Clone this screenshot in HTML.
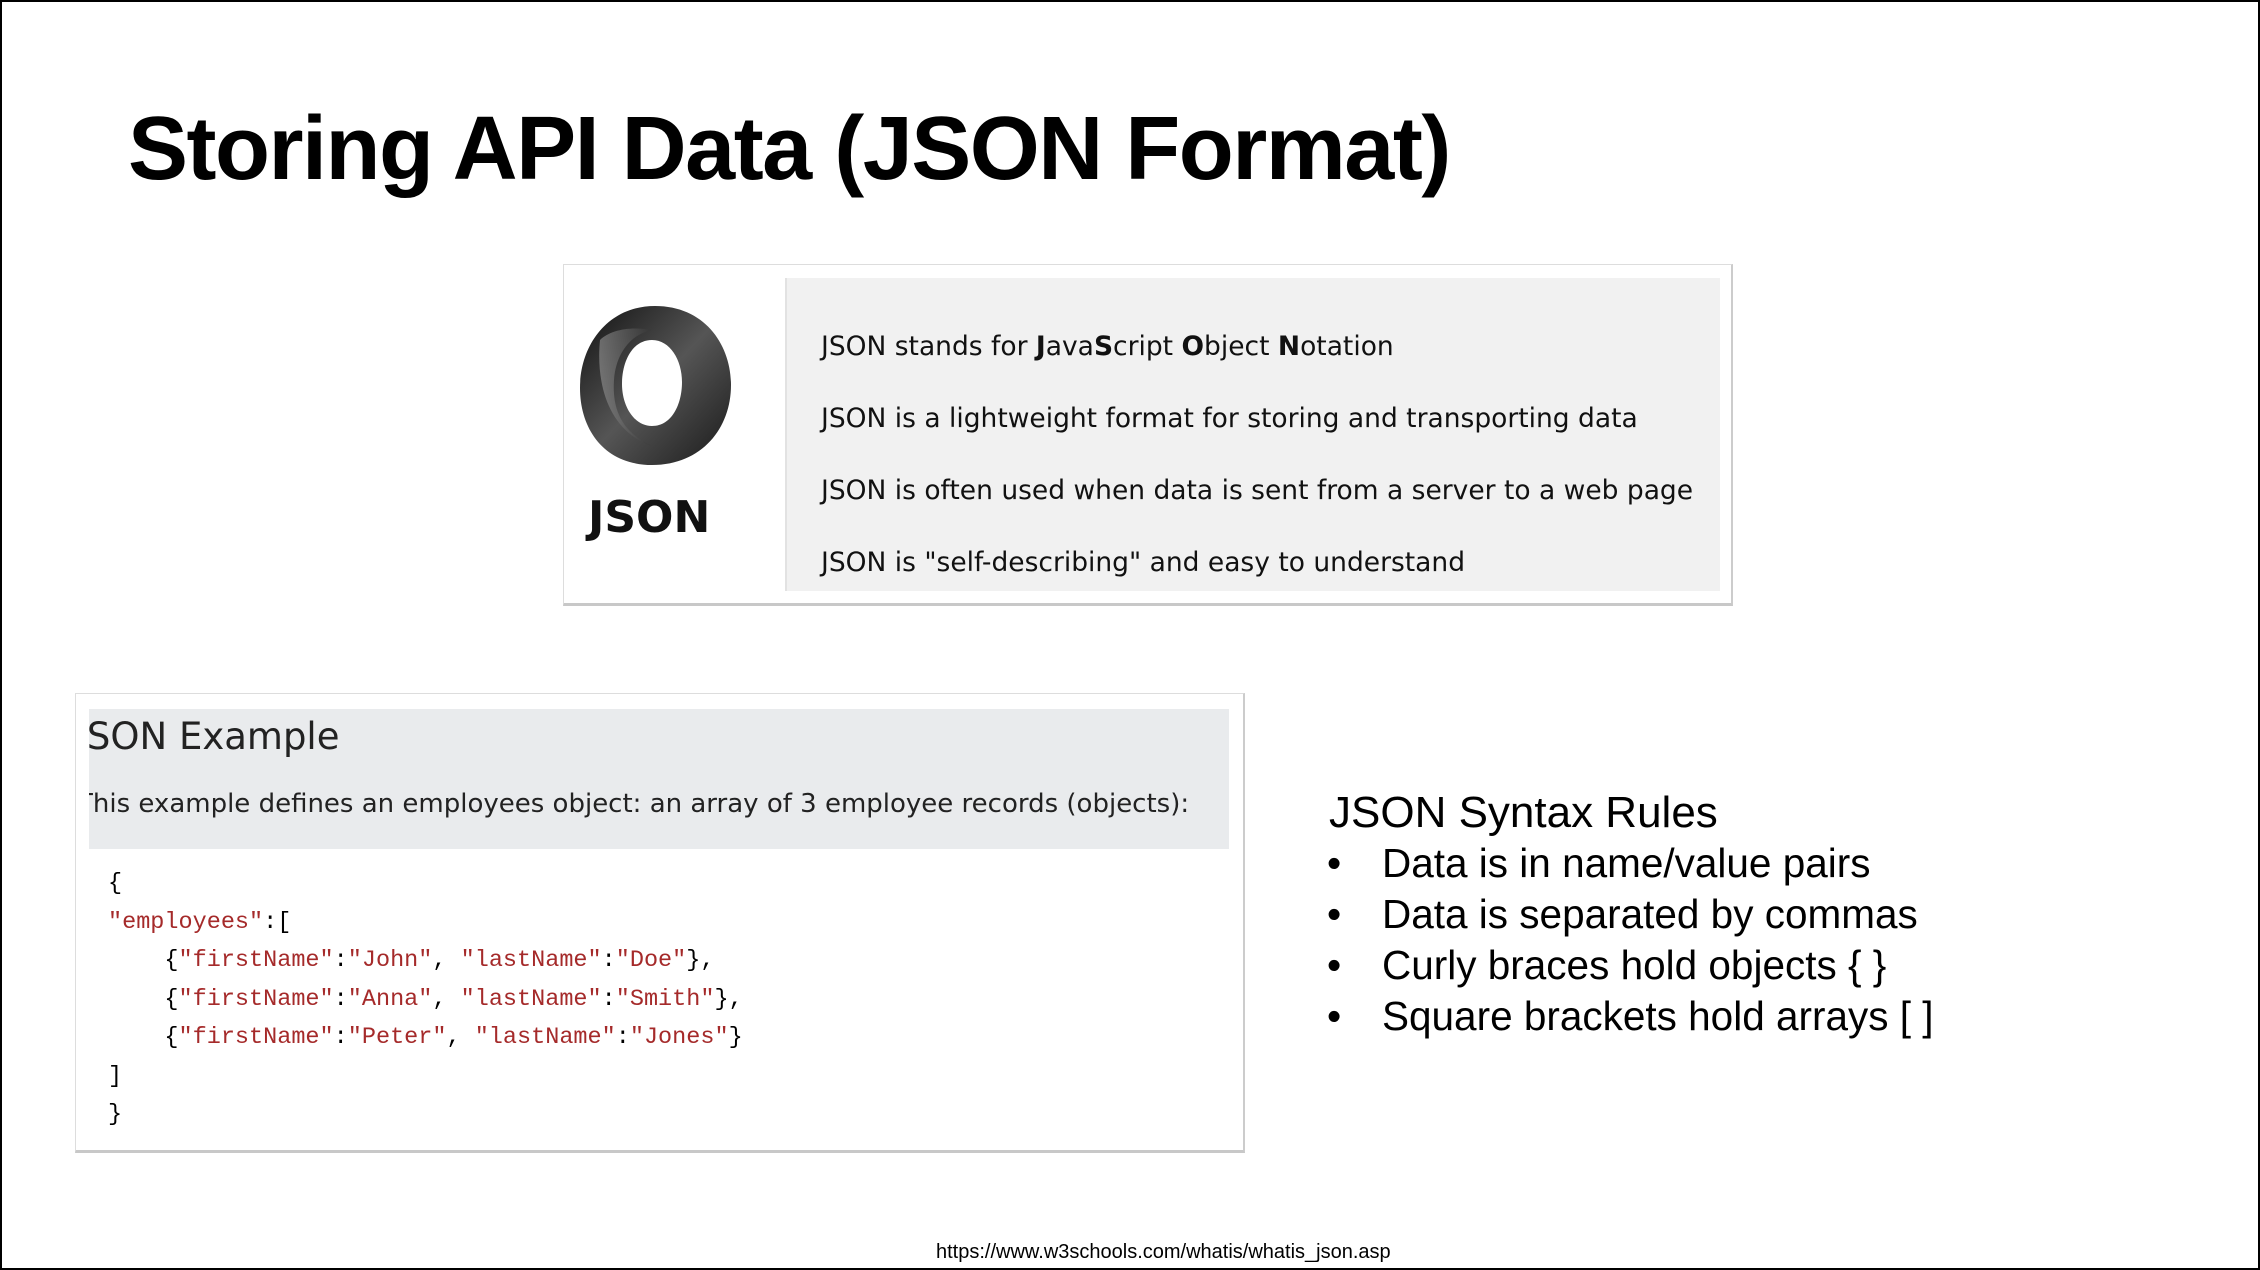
<!DOCTYPE html>
<html><head><meta charset="utf-8"><style>
html,body{margin:0;padding:0}
body{width:2260px;height:1270px;position:relative;overflow:hidden;background:#fff;font-family:"Liberation Sans",sans-serif}
.frame{position:absolute;left:0;top:0;width:2256px;height:1266px;border:2px solid #000}
.abs{position:absolute;white-space:nowrap}
.title{left:128px;top:98px;font-size:90px;font-weight:bold;letter-spacing:-1.5px;color:#000}
.box1{left:563px;top:264px;width:1167px;height:338px;border:1px solid #ddd;border-bottom:3px solid #c8c8c8;border-right:2px solid #ccc;background:#fff}
.panel1{left:785px;top:278px;width:933px;height:313px;background:#f1f1f1;border-left:2px solid #e2e2e2}
.l1{font-family:"DejaVu Sans",sans-serif;font-size:26.5px;color:#111;left:821px}
.box2{left:75px;top:693px;width:1167px;height:456px;border:1px solid #ddd;border-bottom:3px solid #c8c8c8;border-right:2px solid #ccc;background:#fff}
.hdr{left:89px;top:709px;width:1140px;height:140px;background:#e9ebed;overflow:hidden}
.code{font-family:"Liberation Mono",monospace;font-size:23.5px;color:#000}
.s{color:#a52a2a}
.r{font-size:40.5px;color:#000}
</style></head><body>
<div class="frame"></div>
<div class="abs title">Storing API Data (JSON Format)</div>

<div class="abs box1"></div>
<div class="abs panel1"></div>
<svg class="abs" style="left:570px;top:295px" width="180" height="180" viewBox="570 295 180 180">
<defs>
<linearGradient id="g1" x1="0" y1="0" x2="1" y2="1"><stop offset="0" stop-color="#111"/><stop offset="0.5" stop-color="#555"/><stop offset="1" stop-color="#1a1a1a"/></linearGradient>
<linearGradient id="g2" x1="0" y1="0" x2="1" y2="0"><stop offset="0" stop-color="#9a9a9a"/><stop offset="1" stop-color="#333"/></linearGradient>
</defs>
<path fill-rule="evenodd" fill="url(#g1)" d="M655 306 C705 306 731 345 731 385 C731 428 702 465 652 465 C605 465 580 430 580 388 C580 345 608 306 655 306 Z M652 340 C632 340 622 362 622 384 C622 406 634 426 652 426 C672 426 682 404 682 382 C682 360 670 340 652 340 Z"/>
<path fill="url(#g2)" opacity="0.6" d="M600 340 C596 380 606 430 652 446 C622 432 612 410 614 380 C616 352 632 334 652 330 C630 326 610 330 600 340 Z"/>
</svg>
<div class="abs" style="left:588px;top:492px;font-family:'DejaVu Sans',sans-serif;font-weight:bold;font-size:44px;color:#111">JSON</div>
<div class="abs l1" style="top:331px">JSON stands for <b>J</b>ava<b>S</b>cript <b>O</b>bject <b>N</b>otation</div>
<div class="abs l1" style="top:403px">JSON is a lightweight format for storing and transporting data</div>
<div class="abs l1" style="top:475px">JSON is often used when data is sent from a server to a web page</div>
<div class="abs l1" style="top:547px">JSON is "self-describing" and easy to understand</div>

<div class="abs box2"></div>
<div class="abs hdr">
<div class="abs" style="left:-13px;top:6px;font-family:'DejaVu Sans',sans-serif;font-size:37px;color:#222">JSON Example</div>
<div class="abs" style="left:-12px;top:80px;font-family:'DejaVu Sans',sans-serif;font-size:26px;color:#222">This example defines an employees object: an array of 3 employee records (objects):</div>
</div>
<div class="abs code" style="left:108px;top:865px;line-height:38.5px;white-space:pre">{
<span class="s">"employees"</span>:[
    {<span class="s">"firstName"</span>:<span class="s">"John"</span>, <span class="s">"lastName"</span>:<span class="s">"Doe"</span>},
    {<span class="s">"firstName"</span>:<span class="s">"Anna"</span>, <span class="s">"lastName"</span>:<span class="s">"Smith"</span>},
    {<span class="s">"firstName"</span>:<span class="s">"Peter"</span>, <span class="s">"lastName"</span>:<span class="s">"Jones"</span>}
]
}</div>

<div class="abs" style="left:1329px;top:788px;font-size:44px;color:#000">JSON Syntax Rules</div>
<div class="abs r" style="left:1327px;top:840px">•</div><div class="abs r" style="left:1382px;top:840px">Data is in name/value pairs</div>
<div class="abs r" style="left:1327px;top:891px">•</div><div class="abs r" style="left:1382px;top:891px">Data is separated by commas</div>
<div class="abs r" style="left:1327px;top:942px">•</div><div class="abs r" style="left:1382px;top:942px">Curly braces hold objects { }</div>
<div class="abs r" style="left:1327px;top:993px">•</div><div class="abs r" style="left:1382px;top:993px">Square brackets hold arrays [ ]</div>

<div class="abs" style="left:936px;top:1241px;font-size:20px;color:#000">https://www.w3schools.com/whatis/whatis_json.asp</div>
</body></html>
